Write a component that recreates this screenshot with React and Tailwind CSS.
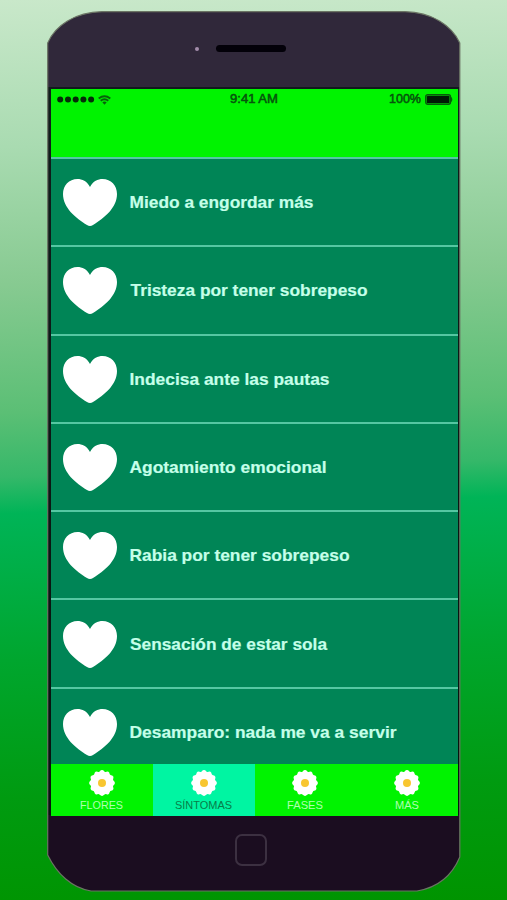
// App.jsx

import React from 'react';

const symptoms = [
  { label: 'Miedo a engordar más', width: 184, indent: 0.5 },
  { label: 'Tristeza por tener sobrepeso', width: 237, indent: 1.5 },
  { label: 'Indecisa ante las pautas', width: 200, indent: 0.5 },
  { label: 'Agotamiento emocional', width: 197, indent: 0.5 },
  { label: 'Rabia por tener sobrepeso', width: 220, indent: 0.5 },
  { label: 'Sensación de estar sola', width: 197, indent: 1 },
  { label: 'Desamparo: nada me va a servir', width: 267, indent: 0.5 },
];

const tabs = [
  { label: 'FLORES', width: 43 },
  { label: 'SÍNTOMAS', width: 57, active: true },
  { label: 'FASES', width: 36 },
  { label: 'MÁS', width: 24 },
];

// Text that always fills the given width
function FitText({ children, width, height, size, x = 0, className }) {
  return (
    <svg width={width + 4} height={height} className={`shrink-0 overflow-visible ${className}`} fill="currentColor">
      <text x={x} y={height - 5} fontSize={size} textLength={width} lengthAdjust="spacingAndGlyphs">
        {children}
      </text>
    </svg>
  );
}

// Phone body, dark at both ends
function PhoneShell() {
  return (
    <svg width="414" height="881" viewBox="0 0 414 881" className="absolute inset-0">
      <defs>
        <linearGradient id="shell" x1="0" y1="0" x2="0" y2="1">
          <stop offset="0.086" stopColor="#30283a" />
          <stop offset="0.086" stopColor="#101c1b" />
          <stop offset="0.9135" stopColor="#07120d" />
          <stop offset="0.9135" stopColor="#1b0d20" />
        </linearGradient>
      </defs>
      <path
        d="M.7 32C8 15 28 1 55 .7H358C385 1 405 15 412.800 32V846C404 867 388 877 370 880H44C25 877 10 863 .7 844Z"
        fill="url(#shell)"
        stroke="#6b7464"
        strokeWidth="1.200"
      />
    </svg>
  );
}

function Heart() {
  return (
    <svg width="54" height="47" viewBox="0 0 54 47" className="mt-px shrink-0 fill-white">
      <path d="M27 8C24 2 19 0 14.500 0 6 0 0 6.500 0 15c0 14 13 24 24 31q3 1.800 6 0C41 39 54 29 54 15 54 6.500 48 0 39.500 0 35 0 30 2 27 8Z" />
    </svg>
  );
}

function Daisy() {
  return (
    <svg width="26" height="26" viewBox="-13 -13 26 26">
      <g fill="#fff">
        {[0, 30, 60, 90, 120, 150, 180, 210, 240, 270, 300, 330].map((angle) => (
          <ellipse key={angle} cx="0" cy="-8" rx="3.200" ry="4.900" transform={`rotate(${angle})`} />
        ))}
        <circle r="11.600" />
      </g>
      <circle r="4" fill="#f8c630" />
    </svg>
  );
}

function StatusBar() {
  return (
    <div className="grid h-[21px] grid-cols-3 items-center pl-1.5 pr-1 text-[#06540c]">
      <div className="flex items-center gap-[3px]">
        <svg width="38" height="8" viewBox="0 0 38 8" fill="#052b08">
          {[3.2, 11, 18.700, 26.400, 34.100].map((cx) => (
            <circle key={cx} cx={cx} cy="3.500" r="3" />
          ))}
        </svg>
        <svg width="13" height="10" viewBox="0 0 13 10" fill="none" stroke="#08600b" strokeWidth="1.900">
          <path d="M.7 3.500Q6.500-1 12.300 3.500M2.700 5.800q3.800-3 7.600 0" />
          <path d="M4.300 7.300q2.200-1.700 4.400 0l-2.200 2.500Z" fill="#08600b" stroke="none" />
        </svg>
      </div>
      <div className="flex justify-center pl-0.5">
        <FitText width={48} height={16} size={12} className="[stroke:currentColor] [stroke-width:.5]">9:41 AM</FitText>
      </div>
      <div className="flex items-center justify-end">
        <FitText width={32} height={16} size={12} className="[stroke:currentColor] [stroke-width:.5]">100%</FitText>
        <svg width="29" height="11" viewBox="0 0 29 11" className="shrink-0">
          <rect x=".7" y=".7" width="24.800" height="9.600" rx="2" fill="#06a00a" stroke="#075c0b" strokeWidth="1.300" />
          <rect x="2" y="2" width="22.200" height="7" rx=".5" fill="#001b05" />
          <path d="M25.800 2.500Q29 5.500 25.800 8.500Z" fill="#075c0b" />
        </svg>
      </div>
    </div>
  );
}

export default function App() {
  return (
    <div className="h-[900px] w-[507px] overflow-hidden bg-[linear-gradient(178deg,#c9e8ca_0%,#a9dbb1_16%,#87ca91_31%,#5bbf75_45%,#35b869_52%,#00b457_56%,#00a62e_72%,#009b10_87%,#009400_100%)] pl-[47px] pt-[11px] font-['Liberation_Sans',sans-serif]">
      <div className="relative h-[881px] w-[414px]">
        <PhoneShell />
        <div className="relative flex h-full flex-col">
          <div className="flex h-[75px] shrink-0 items-center pl-[148px]">
            <span className="size-1 rounded-full bg-[#a38dab]" />
            <span className="ml-[17px] h-[7px] w-[70px] rounded-full bg-[#030109]" />
          </div>

          <div className="ml-1 mr-[3px] mt-[3px] flex h-[727px] shrink-0 flex-col overflow-hidden bg-[#008556]">
            <header className="h-[68px] shrink-0 bg-[#00f300]">
              <StatusBar />
            </header>

            <ul className="h-[607px] shrink-0 overflow-hidden">
              {symptoms.map((symptom) => (
                <li
                  key={symptom.label}
                  className="flex h-[88.300px] items-center gap-3 border-t-2 border-[#55c7a2] pl-3 text-[#c5ffe9]"
                >
                  <Heart />
                  <FitText
                    width={symptom.width}
                    height={22}
                    size={17}
                    x={symptom.indent}
                    className="font-bold [stroke:currentColor] [stroke-width:.2]"
                  >
                    {symptom.label}
                  </FitText>
                </li>
              ))}
            </ul>

            <nav className="grid h-[52px] shrink-0 grid-cols-4 bg-[#00f300]">
              {tabs.map((tab) => (
                <div
                  key={tab.label}
                  className={`flex flex-col items-center pt-1.5 ${
                    tab.active ? 'bg-[#00f5a2] text-[#087c49]' : 'text-[#afffb1]'
                  }`}
                >
                  <Daisy />
                  <FitText width={tab.width} height={18} size={10.500} x={2}>
                    {tab.label}
                  </FitText>
                </div>
              ))}
            </nav>
          </div>

          <div className="flex flex-1 justify-center pt-[18px]">
            <span className="-ml-1.5 size-8 rounded-[7px] border-2 border-[#3c3041]" />
          </div>
        </div>
      </div>
    </div>
  );
}
